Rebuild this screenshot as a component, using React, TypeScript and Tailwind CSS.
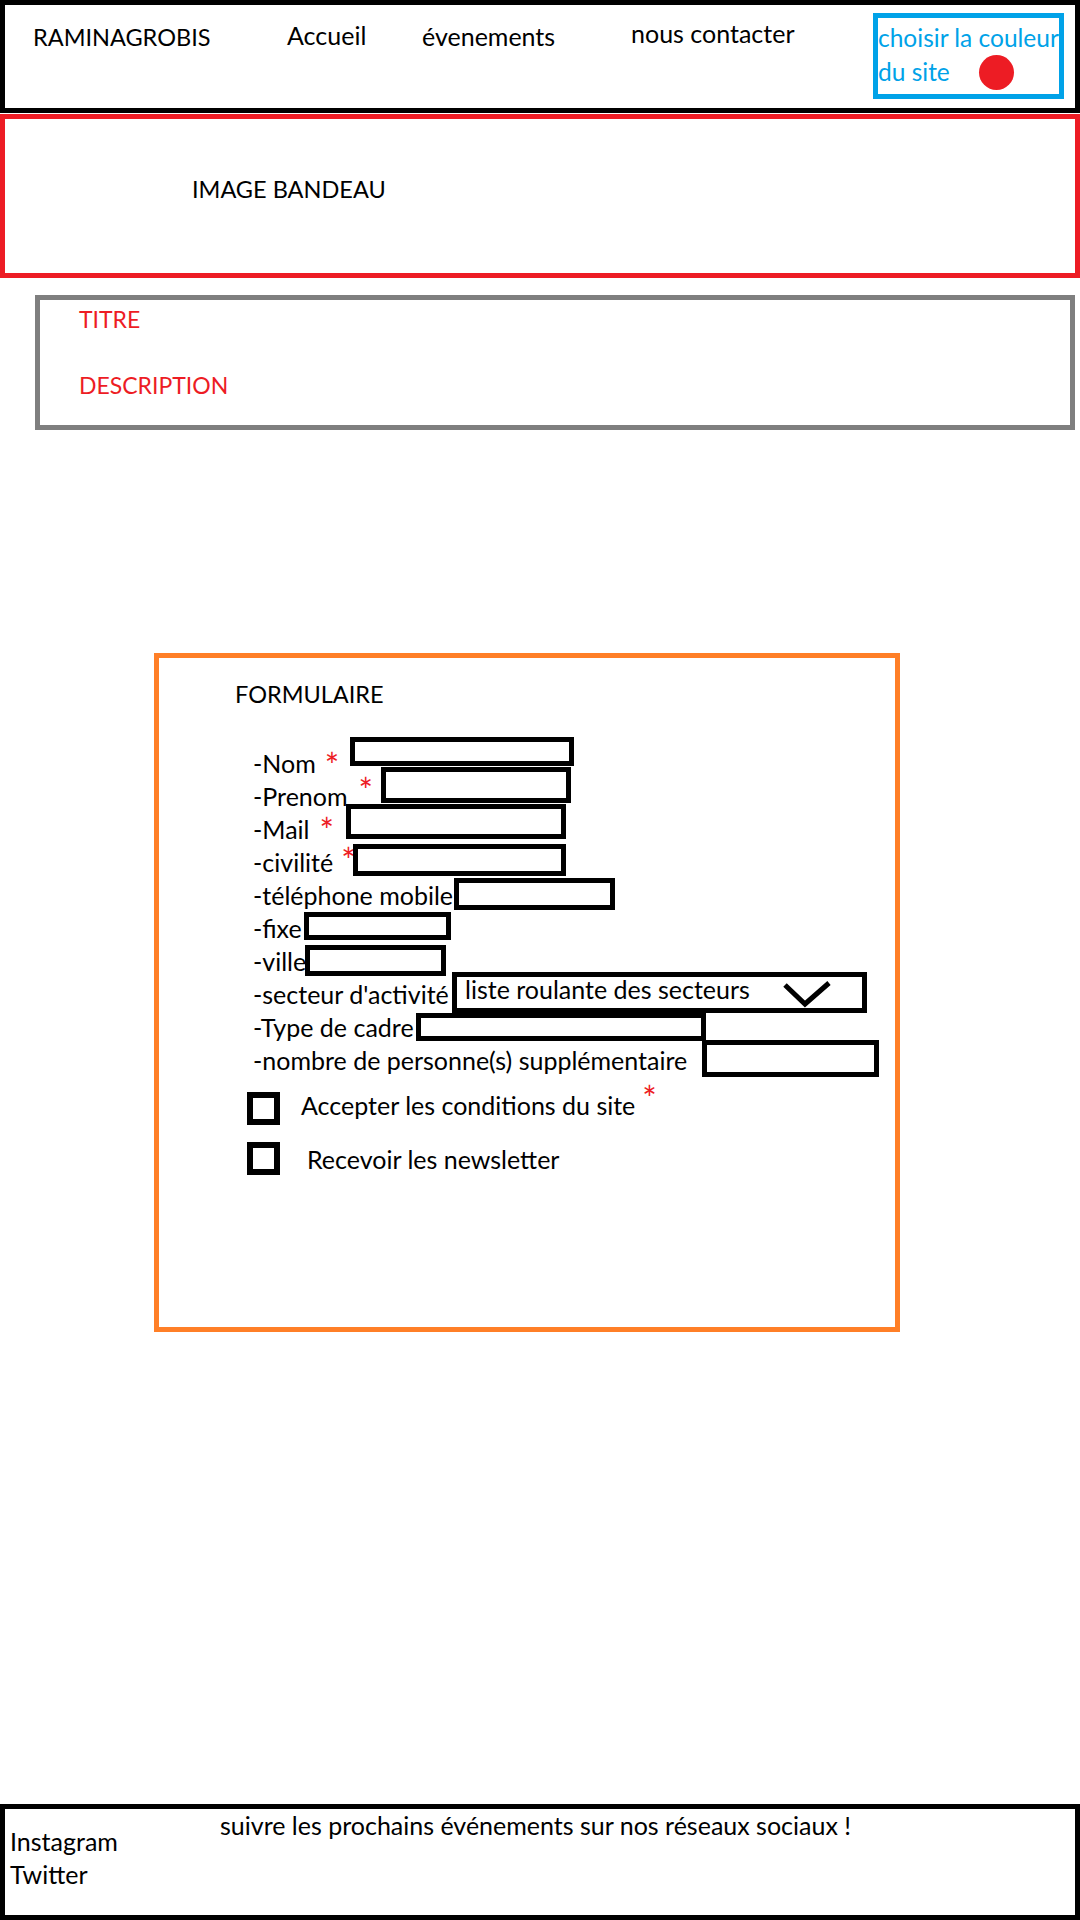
type Row = {
  label: string
  lead: string
  star?: string
  box: string
}

// each row: fixed-width lead (label + asterisk) so the box lands where the sketch has it
const rows: Row[] = [
  { label: '-Nom', lead: 'w-[97px]', star: 'ml-[9px] mt-[3px]', box: 'mt-[-10px] w-[224px] h-[29px]' },
  { label: '-Prenom', lead: 'w-[128px]', star: 'ml-[11px] mt-[-5px]', box: 'mt-[-13px] w-[190px] h-[36px]' },
  { label: '-Mail', lead: 'w-[93px]', star: 'ml-[10px] mt-[2px]', box: 'mt-[-9px] w-[220px] h-[35px]' },
  { label: '-civilité', lead: 'w-[100px]', star: 'ml-[8px] mt-[-1px]', box: 'mt-[-2px] w-[213px] h-[32px]' },
  { label: '-téléphone mobile', lead: 'w-[201px]', box: 'mt-[-1px] w-[161px] h-[32px]' },
  { label: '-fixe', lead: 'w-[51px]', box: 'mt-0 w-[147px] h-[28px]' },
  { label: '-ville', lead: 'w-[52px]', box: 'mt-0 w-[141px] h-[31px]' },
]

function Star({ className }: { className?: string }) {
  return <span className={`text-[#ed1c24] text-[34px] leading-[30px] ${className ?? ''}`}>*</span>
}

function FormRow({ row }: { row: Row }) {
  return (
    <div className="flex items-start h-[33px]">
      <div className={`flex items-start shrink-0 whitespace-nowrap ${row.lead}`}>
        <span className="leading-[33px]">{row.label}</span>
        {row.star && <Star className={row.star} />}
      </div>
      <div className={`shrink-0 border-[5px] border-black ${row.box}`} />
    </div>
  )
}

function Checkbox() {
  return <div className="w-[33px] h-[33px] border-[6px] border-black shrink-0" />
}

export default function App() {
  return (
    <div className="flex flex-col h-[1920px] w-[1080px] bg-white text-black font-['Lato','Open_Sans',sans-serif] text-[25px] leading-[30px]">
      {/* header */}
      <header className="flex items-start h-[113px] border-[5px] border-black pl-[28px] whitespace-nowrap">
        <span className="w-[254px] mt-[17px] text-[23.5px]">RAMINAGROBIS</span>
        <span className="w-[135px] mt-[15px]">Accueil</span>
        <span className="w-[209px] mt-[16px]">évenements</span>
        <span className="w-[242px] mt-[13px]">nous contacter</span>
        <div className="w-[191px] h-[86px] mt-[8px] border-[5px] border-[#00a2e8] text-[#00a2e8] text-[24.5px] leading-[34px] pt-[3px]">
          <div>choisir la couleur</div>
          <div className="flex items-center h-[34px]">
            <span>du site</span>
            <span className="ml-[29px] w-[35px] h-[35px] rounded-full bg-[#ed1c24]" />
          </div>
        </div>
      </header>

      {/* bandeau */}
      <section className="mt-[1px] h-[164px] border-[5px] border-[#ed1c24] pl-[187px] pt-[55px] text-[23.5px]">
        IMAGE BANDEAU
      </section>

      {/* titre / description */}
      <section className="mt-[17px] ml-[35px] w-[1040px] h-[135px] border-[5px] border-[#7f7f7f] pl-[39px] pt-[4px] text-[#ed1c24] text-[23px]">
        <div>TITRE</div>
        <div className="mt-[36px]">DESCRIPTION</div>
      </section>

      {/* formulaire */}
      <section className="mt-[223px] ml-[154px] w-[746px] h-[679px] border-[5px] border-[#ff7f27] pt-[21px]">
        <div className="pl-[76px] text-[23.5px]">FORMULAIRE</div>
        <div className="mt-[38px] pl-[94px]">
          {rows.map((r) => (
            <FormRow key={r.label} row={r} />
          ))}

          {/* secteur */}
          <div className="flex items-start h-[33px]">
            <div className="w-[199px] shrink-0 whitespace-nowrap leading-[33px]">-secteur d'activité</div>
            <div className="flex items-start shrink-0 mt-[-6px] w-[415px] h-[41px] border-[5px] border-black">
              <span className="pl-[8px] leading-[24px] whitespace-nowrap">liste roulante des secteurs</span>
              <svg className="ml-auto mr-[30px] mt-[3px]" width="50" height="28" viewBox="0 0 50 28">
                <path d="M3 5 L23 24 L47 3" fill="none" stroke="black" strokeWidth="5" />
              </svg>
            </div>
          </div>

          {/* type de cadre */}
          <div className="flex items-start h-[33px]">
            <div className="w-[163px] shrink-0 whitespace-nowrap leading-[33px]">-Type de cadre</div>
            <div className="shrink-0 mt-[2px] w-[290px] h-[28px] border-[5px] border-black" />
          </div>

          {/* nombre */}
          <div className="flex items-start h-[33px]">
            <div className="w-[449px] shrink-0 whitespace-nowrap leading-[33px]">-nombre de personne(s) supplémentaire</div>
            <div className="shrink-0 mt-[-4px] w-[177px] h-[37px] border-[5px] border-black" />
          </div>

          {/* checkboxes */}
          <div className="flex items-start mt-[13px] ml-[-6px]">
            <div className="mt-[2px]">
              <Checkbox />
            </div>
            <span className="ml-[21px] whitespace-nowrap">Accepter les conditions du site</span>
            <Star className="ml-[7px] mt-[-7px]" />
          </div>
          <div className="flex items-start mt-[17px] ml-[-6px]">
            <Checkbox />
            <span className="ml-[27px] mt-[2px] whitespace-nowrap">Recevoir les newsletter</span>
          </div>
        </div>
      </section>

      {/* footer */}
      <footer className="mt-auto flex items-start h-[116px] border-[5px] border-black pl-[5px] whitespace-nowrap">
        <div className="w-[210px] pt-[16px] leading-[33px]">
          <div>Instagram</div>
          <div>Twitter</div>
        </div>
        <div className="pt-[1px]">suivre les prochains événements sur nos réseaux sociaux !</div>
      </footer>
    </div>
  )
}
